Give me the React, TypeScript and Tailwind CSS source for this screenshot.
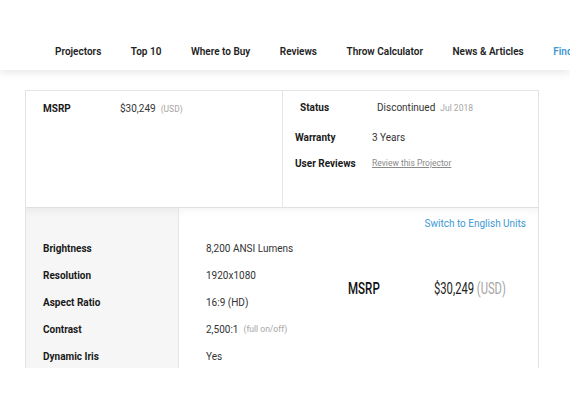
import React from "react"

const navItems = ["Projectors", "Top 10", "Where to Buy", "Reviews", "Throw Calculator", "News & Articles"]

const specRows: { label: string; value: string; note?: string }[] = [
  { label: "Brightness", value: "8,200 ANSI Lumens" },
  { label: "Resolution", value: "1920x1080" },
  { label: "Aspect Ratio", value: "16:9 (HD)" },
  { label: "Contrast", value: "2,500:1", note: "(full on/off)" },
  { label: "Dynamic Iris", value: "Yes" },
]

const InfoRow: React.FC<{ label: string; indent: string; children: React.ReactNode }> = ({ label, indent, children }) => (
  <div className={`flex items-center ${indent}`}>
    <span className="w-[77px] shrink-0 text-[10px] font-bold text-[#1a1a1a]">{label}</span>
    <span className="flex items-baseline gap-[5px] text-[10px] text-[#333]">{children}</span>
  </div>
)

export default function App() {
  return (
    <div className="h-[400px] w-[570px] overflow-hidden bg-white" style={{ fontFamily: "Roboto, 'Liberation Sans', sans-serif" }}>
      {/* Верхняя навигация */}
      <header className="relative z-10 h-[70px] overflow-hidden bg-white shadow-[0_3px_8px_rgba(0,0,0,0.09)]">
        <nav className="flex gap-[29.5px] whitespace-nowrap pl-[55px] pt-[45px] text-[10px] font-semibold leading-[14px] text-[#222]">
          {navItems.map((item) => (
            <span key={item}>{item}</span>
          ))}
          <span className="text-[#3d98d4]">Find a Projector</span>
        </nav>
      </header>

      <div className="h-[298px] overflow-hidden pl-[25px] pr-[31px] pt-[20px]">
        <div className="border border-[#e4e4e4]">
          {/* Блок с ценой и статусом */}
          <div className="flex h-[117px] border-b border-[#e0e0e0]">
            <div className="w-[257px] border-r border-[#e6e6e6] pt-[10px]">
              <InfoRow label="MSRP" indent="pl-[17px]">
                $30,249 <span className="text-[8.5px] text-[#a5a5a5]">(USD)</span>
              </InfoRow>
            </div>
            <div className="flex flex-1 flex-col pt-[9px]">
              <InfoRow label="Status" indent="pl-[17px]">
                Discontinued <span className="text-[8.5px] text-[#a5a5a5]">Jul 2018</span>
              </InfoRow>
              <div className="mt-[15px]">
                <InfoRow label="Warranty" indent="pl-[12px]">3 Years</InfoRow>
              </div>
              <div className="mt-[11px]">
                <InfoRow label="User Reviews" indent="pl-[12px]">
                  <span className="text-[8.5px] text-[#8a8a8a] underline">Review this Projector</span>
                </InfoRow>
              </div>
            </div>
          </div>

          {/* Характеристики */}
          <div className="flex h-[300px]">
            <div className="w-[153px] shrink-0 border-r border-[#e6e6e6] bg-[#f6f6f6] pl-[17px] pt-[27px] shadow-[inset_0_8px_10px_-6px_rgba(0,0,0,0.06)]">
              {specRows.map((row) => (
                <div key={row.label} className="flex h-[27px] items-center text-[10px] font-bold text-[#1a1a1a]">
                  {row.label}
                </div>
              ))}
            </div>
            <div className="min-w-0 flex-1 overflow-hidden pl-[27px] pr-[12px] pt-[9px] shadow-[inset_0_8px_10px_-6px_rgba(0,0,0,0.05)]">
              <div className="flex justify-end text-[10px] leading-[14px] text-[#3d98d4]">Switch to English Units</div>
              <div className="mt-[4px] flex">
                <div className="w-[142px] shrink-0">
                  {specRows.map((row) => (
                    <div key={row.label} className="flex h-[27px] items-center gap-[5px] text-[10px] text-[#333]">
                      {row.value}
                      {row.note && <span className="text-[8.5px] text-[#a5a5a5]">{row.note}</span>}
                    </div>
                  ))}
                </div>
                <div className="mt-[44px] flex h-[20px] items-center">
                  <span className="w-[86px] shrink-0">
                    <span className="inline-block origin-left scale-x-[0.68] text-[17px] font-medium text-[#111]">MSRP</span>
                  </span>
                  <span className="inline-block origin-left scale-x-[0.66] whitespace-nowrap text-[17px] text-[#222]">
                    $30,249 <span className="text-[#a5a5a5]">(USD)</span>
                  </span>
                </div>
              </div>
            </div>
          </div>
        </div>
      </div>
    </div>
  )
}
